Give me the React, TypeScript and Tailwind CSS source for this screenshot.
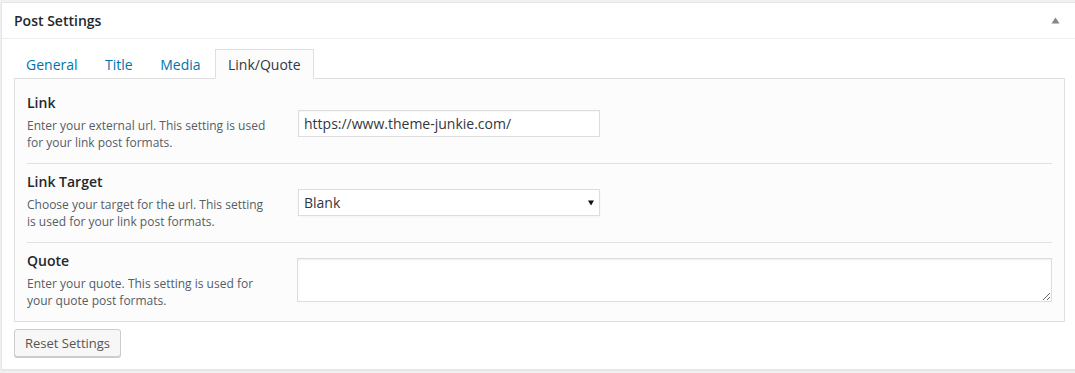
import React, { useState } from 'react';

const tabs = ['General', 'Title', 'Media', 'Link/Quote'];

const App: React.FC = () => {
    const [active, setActive] = useState<string>('Link/Quote');
    const [link, setLink] = useState<string>('https://www.theme-junkie.com/');
    const [target, setTarget] = useState<string>('Blank');
    const [quote, setQuote] = useState<string>('');

    return (
        <div className="w-[1075px] h-[373px] overflow-hidden bg-[#f1f1f1] pt-[2px] pl-[1px] font-['Open_Sans',sans-serif]">
            <div className="w-[1080px] bg-white border border-[#e5e5e5] shadow-[0_1px_1px_rgba(0,0,0,0.04)]">
                {/* header */}
                <div className="h-[36px] border-b border-[#eeeeee] flex items-center justify-between pl-[12px] pr-[16px]">
                    <h2 className="text-[14px] font-semibold text-[#23282d] leading-[20px]">Post Settings</h2>
                    <svg width="9" height="7" viewBox="0 0 9 7" className="mr-[4px]">
                        <path d="M4.5 0.5L8.5 6.5H0.5Z" fill="#82878c" />
                    </svg>
                </div>

                <div className="pt-[10px] pl-[12px] pb-[12px]">
                    <div className="flex gap-[1.5px] -ml-[1px] relative z-10">
                        {tabs.map((tab) => (
                            <button
                                key={tab}
                                onClick={() => setActive(tab)}
                                className={`h-[30px] -mb-[1px] px-[12px] pt-[5px] pb-[4px] text-[14px] leading-[20px] border ${
                                    active === tab
                                        ? 'bg-[#fcfcfc] border-[#dfdfdf] border-b-[#fcfcfc] text-[#32373c]'
                                        : 'border-transparent text-[#0073aa]'
                                }`}
                            >
                                {tab}
                            </button>
                        ))}
                    </div>

                    <div className="w-[1051px] bg-[#fcfcfc] border border-[#dfdfdf] px-[12px] pt-[6px]">
                        <div className="flex pt-[8px] pb-[12px] border-b border-[#e1e1e1]">
                            <div className="w-[271px]">
                                <div className="text-[14px] font-semibold text-[#23282d] leading-[20px] mb-[4px]">Link</div>
                                <p className="text-[12px] leading-[17px] text-[#555d66]">
                                    Enter your external url. This setting is used<br />for your link post formats.
                                </p>
                            </div>
                            <input
                                type="text"
                                value={link}
                                onChange={(e) => setLink(e.target.value)}
                                className="mt-[17px] w-[302px] h-[27px] px-[5px] bg-white border border-[#dddddd] shadow-[inset_0_1px_2px_rgba(0,0,0,0.04)] text-[14px] text-[#32373c] outline-none"
                            />
                        </div>

                        <div className="flex pt-[8px] pb-[12px] border-b border-[#e1e1e1]">
                            <div className="w-[271px]">
                                <div className="text-[14px] font-semibold text-[#23282d] leading-[20px] mb-[4px]">Link Target</div>
                                <p className="text-[12px] leading-[17px] text-[#555d66]">
                                    Choose your target for the url. This setting<br />is used for your link post formats.
                                </p>
                            </div>
                            <div className="relative mt-[17px] w-[302px] h-[27px]">
                                <select
                                    value={target}
                                    onChange={(e) => setTarget(e.target.value)}
                                    className="appearance-none w-full h-full pl-[5px] pr-[20px] bg-white border border-[#dddddd] shadow-[0_1px_2px_rgba(0,0,0,0.04)] text-[14px] text-[#32373c] outline-none"
                                >
                                    <option>Blank</option>
                                    <option>Self</option>
                                </select>
                                <svg width="6" height="6" viewBox="0 0 6 6" className="absolute left-[290px] top-[11px] pointer-events-none">
                                    <path d="M0 0.5H6L3 5.5Z" fill="#111111" />
                                </svg>
                            </div>
                        </div>

                        <div className="flex pt-[8px] pb-[12px]">
                            <div className="w-[271px]">
                                <div className="text-[14px] font-semibold text-[#23282d] leading-[20px] mb-[4px]">Quote</div>
                                <p className="text-[12px] leading-[17px] text-[#555d66]">
                                    Enter your quote. This setting is used for<br />your quote post formats.
                                </p>
                            </div>
                            <textarea
                                value={quote}
                                onChange={(e) => setQuote(e.target.value)}
                                className="mt-[7px] -ml-[1px] w-[756px] h-[44px] p-[5px] bg-white border border-[#dddddd] shadow-[inset_0_1px_2px_rgba(0,0,0,0.07)] text-[14px] text-[#32373c] outline-none"
                            />
                        </div>
                    </div>

                    <button className="mt-[7px] h-[28px] px-[10px] bg-[#f7f7f7] border border-[#cccccc] rounded-[3px] shadow-[0_1px_0_#cccccc] text-[13px] leading-[26px] text-[#555555]">
                        Reset Settings
                    </button>
                </div>
            </div>
        </div>
    );
};

export default App;
